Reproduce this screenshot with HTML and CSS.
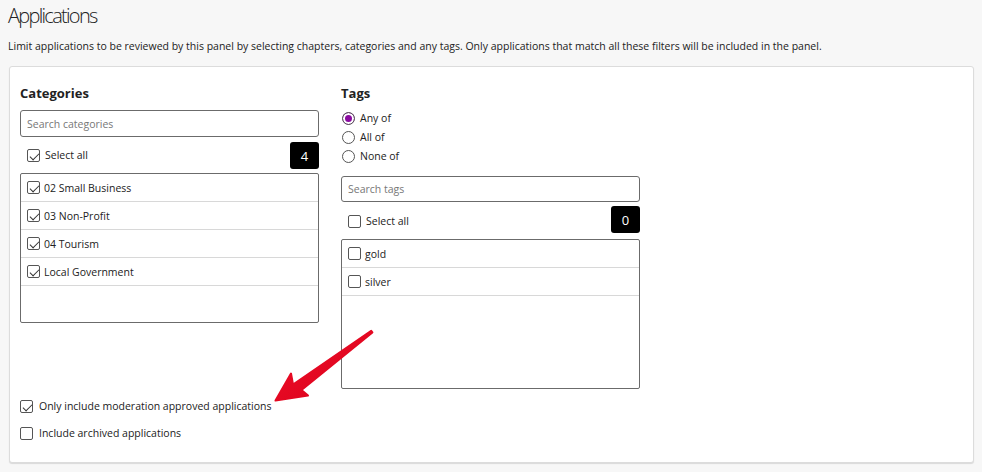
FILE: index.html
```html
<!DOCTYPE html>
<html lang="en">
<head>
  <meta charset="UTF-8" />
  <title>Applications</title>
  <link rel="stylesheet" href="styles.css">
</head>
<body>
  <div class="page">
    <h1>Applications</h1>
    <p class="intro">Limit applications to be reviewed by this panel by selecting chapters, categories and any tags. Only applications that match all these filters will be included in the panel.</p>

    <div class="panel">
      <div class="columns">
        <div class="col">
          <h3>Categories</h3>
          <input class="search" type="text" placeholder="Search categories">
          <div class="select-row">
            <label class="check"><span class="box on"></span>Select all</label>
            <span class="count">4</span>
          </div>
          <ul class="list">
            <li><span class="box on"></span>02 Small Business</li>
            <li><span class="box on"></span>03 Non-Profit</li>
            <li><span class="box on"></span>04 Tourism</li>
            <li><span class="box on"></span>Local Government</li>
          </ul>
        </div>

        <div class="col">
          <h3>Tags</h3>
          <div class="radios">
            <label class="radio"><span class="dot on"></span>Any of</label>
            <label class="radio"><span class="dot"></span>All of</label>
            <label class="radio"><span class="dot"></span>None of</label>
          </div>
          <input class="search tags" type="text" placeholder="Search tags">
          <div class="select-row tags">
            <label class="check"><span class="box"></span>Select all</label>
            <span class="count">0</span>
          </div>
          <ul class="list">
            <li><span class="box"></span>gold</li>
            <li><span class="box"></span>silver</li>
          </ul>
        </div>
      </div>

      <div class="options">
        <label class="check"><span class="box on"></span>Only include moderation approved applications</label>
        <label class="check"><span class="box"></span>Include archived applications</label>
      </div>
    </div>
  </div>

  <!-- annotation arrow -->
  <svg class="arrow" width="982" height="472" viewBox="0 0 982 472">
    <defs>
      <linearGradient id="red" x1="0" y1="0" x2="1" y2="1">
        <stop offset="0" stop-color="#f0102a"/>
        <stop offset="1" stop-color="#d8001a"/>
      </linearGradient>
    </defs>
    <polygon points="372.4,332.4 301.5,390 308,395.5 275.5,400.5 291,373.5 293,384.5 371.2,330.8"
             fill="url(#red)" stroke="url(#red)" stroke-width="2" stroke-linejoin="round"/>
  </svg>
</body>
</html>
```

FILE: styles.css
```css
html, body {
  margin: 0;
  padding: 0;
}
body {
  background: #f7f7f7;
  color: #222;
  font-family: 'Open Sans', 'Noto Sans', Arial, sans-serif;
  font-size: 10.5px;
  position: relative;
  width: 982px;
  height: 472px;
  overflow: hidden;
}
.page {
  padding: 0 8px;
}
h1 {
  font-size: 20px;
  font-weight: 300;
  margin: 0;
  padding-top: 4px;
  line-height: 24px;
  letter-spacing: -1.7px;
}
.intro {
  margin: 10px 0 0;
  line-height: 16px;
}
.panel {
  margin: 12px 0 0 1px;
  background: #fff;
  border: 1px solid #dcdcdc;
  border-radius: 3px;
  box-shadow: 0 1px 1px rgba(0, 0, 0, .12);
  padding: 17px 10px 17px;
  height: 361px;
}
.columns {
  display: flex;
  gap: 22px;
}
.col {
  width: 299px;
  display: flex;
  flex-direction: column;
}
h3 {
  font-size: 13px;
  font-weight: 700;
  margin: 0;
  line-height: 18px;
}
.search {
  box-sizing: border-box;
  height: 27px;
  width: 100%;
  margin: 8px 0 0;
  border: 1px solid #6b6b6b;
  border-radius: 3px;
  padding: 0 6px;
  font: inherit;
  color: #222;
  background: #fff;
}
.search::placeholder {
  color: #777;
}
.search.tags {
  margin-top: 10px;
  height: 26px;
}
.select-row {
  display: flex;
  justify-content: space-between;
  align-items: center;
  margin: 5px 0 4px;
  padding-left: 7px;
}
.select-row.tags {
  margin: 4px 0 6px;
}
.select-row.tags .check {
  margin-top: 4px;
}
.count {
  width: 29px;
  height: 27px;
  background: #000;
  color: #fff;
  border-radius: 3px;
  display: flex;
  align-items: center;
  justify-content: center;
  font-size: 13px;
  font-weight: 500;
}
.check, .radio {
  display: flex;
  align-items: center;
  gap: 5px;
  line-height: 19px;
}
.box {
  box-sizing: border-box;
  width: 13px;
  height: 13px;
  border: 1px solid #555;
  border-radius: 2px;
  background: #fff;
  position: relative;
  flex: none;
}
.box.on::after {
  content: '';
  position: absolute;
  left: 3.5px;
  top: 0.5px;
  width: 4px;
  height: 8px;
  border: solid #333;
  border-width: 0 1px 1px 0;
  transform: rotate(45deg);
}
.list {
  list-style: none;
  margin: 0;
  padding: 0;
  box-sizing: border-box;
  height: 150px;
  border: 1px solid #6b6b6b;
  border-radius: 2px;
}
.list li {
  display: flex;
  align-items: center;
  gap: 4px;
  height: 27px;
  padding-left: 6px;
  border-bottom: 1px solid #d8d8d8;
}
.radios {
  margin-top: 7px;
}
.dot {
  box-sizing: border-box;
  width: 13px;
  height: 13px;
  border: 1px solid #555;
  border-radius: 50%;
  background: #fff;
  flex: none;
  margin-left: 1px;
}
.dot.on {
  background: #8a0aa0;
  box-shadow: inset 0 0 0 2px #fff;
}
.options {
  margin-top: 4px;
}
.options .check {
  line-height: 27px;
  gap: 6px;
}
.arrow {
  position: absolute;
  top: 0;
  left: 0;
  pointer-events: none;
}
```
